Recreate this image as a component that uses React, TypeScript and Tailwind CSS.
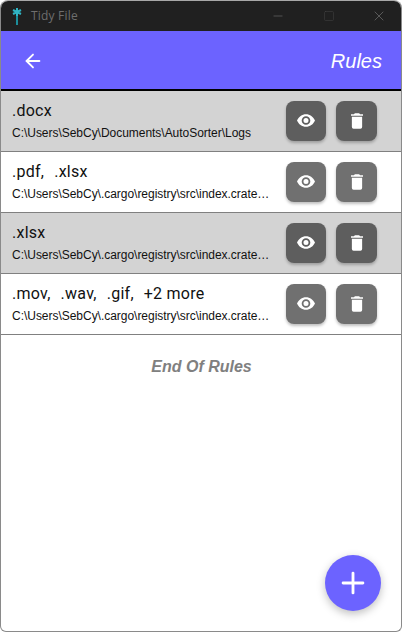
import { ArrowLeft, Minus, Plus, Square, X } from "lucide-react";

type Rule = {
  types: string[];
  path: string;
  shaded: boolean;
};

const cargoPath = "C:\\Users\\SebCy\\.cargo\\registry\\src\\index.crate…";

const rules: Rule[] = [
  { types: [".docx"], path: "C:\\Users\\SebCy\\Documents\\AutoSorter\\Logs", shaded: true },
  { types: [".pdf,", ".xlsx"], path: cargoPath, shaded: false },
  { types: [".xlsx"], path: cargoPath, shaded: true },
  { types: [".mov,", ".wav,", ".gif,", "+2 more"], path: cargoPath, shaded: false },
];

function TrashIcon() {
  return (
    <svg width="12" height="16" viewBox="0 0 14 18" fill="white">
      <path d="M4.5 0h5l1 1H14v2H0V1h3.500zM1 4h12v12a2 2 0 0 1-2 2H3a2 2 0 0 1-2-2z" />
    </svg>
  );
}

function EyeIcon() {
  return (
    <svg width="18" height="13" viewBox="0 0 20 14">
      <path fill="white" fillRule="evenodd" d="M10 0c4.400 0 8.200 2.800 10 7-1.800 4.200-5.600 7-10 7S1.800 11.200 0 7c1.800-4.200 5.600-7 10-7zm0 2.200a4.800 4.800 0 1 0 0 9.600 4.800 4.800 0 0 0 0-9.600zm0 2a2.800 2.800 0 1 1 0 5.600 2.800 2.800 0 0 1 0-5.600z" />
    </svg>
  );
}

function RuleRow({ rule }: { rule: Rule }) {
  const btn = rule.shaded ? "bg-[#5e5e5e]" : "bg-[#707070]";
  return (
    <div className={`flex h-[61px] items-center border-b border-[#808080] ${rule.shaded ? "bg-[#d3d3d3]" : "bg-white"}`}>
      <div className="w-[259px] ml-[11px] min-w-0 pb-px">
        <div className="flex gap-[10px] text-[16px] leading-[20px] tracking-[0.25px] text-[#111] font-['Roboto',sans-serif]">
          {rule.types.map((t) => (
            <span key={t}>{t}</span>
          ))}
        </div>
        <div className="mt-[4px] whitespace-nowrap text-[12px] leading-[16px] tracking-[-0.03px] text-[#111] font-['Liberation_Sans',sans-serif]">
          {rule.path}
        </div>
      </div>
      <div className="ml-[15px] flex gap-[10px] pb-px">
        <button className={`flex h-10 w-10 items-center justify-center rounded-lg shadow-[0_2px_3px_rgba(0,0,0,0.25)] ${btn}`}>
          <EyeIcon />
        </button>
        <button className={`flex h-10 w-[41px] items-center justify-center rounded-lg shadow-[0_2px_3px_rgba(0,0,0,0.25)] ${btn}`}>
          <TrashIcon />
        </button>
      </div>
    </div>
  );
}

export default function App() {
  return (
    <div className="h-[632px] w-[402px] bg-white overflow-hidden">
      <div className="relative flex h-full flex-col overflow-hidden rounded-t-lg rounded-b-md border border-[#8a8a8a] border-t-[#a8a8a8] bg-white">
        {/* Title bar */}
        <div className="flex h-[30px] shrink-0 items-center bg-[#202020] pl-[10px]">
          <svg width="12" height="18" viewBox="0 0 12 18" className="mr-[8px]">
            <path d="M5 7h2v11H5z" fill="#1c8f9c" />
            <path d="M6 1v8M2 3l8 4M10 3L2 7" stroke="#2fb4c4" strokeWidth="2" fill="none" />
          </svg>
          <span className="text-[12px] tracking-[0.2px] text-[#6e6e6e] font-['Open_Sans',sans-serif]">Tidy File</span>
          <div className="ml-auto flex items-center text-[#777]">
            <Minus size={14} strokeWidth={1} className="mr-[38px]" />
            <Square size={12} strokeWidth={1} className="mr-[36px] text-[#444]" />
            <X size={16} strokeWidth={1} className="mr-[14px]" />
          </div>
        </div>

        {/* Header */}
        <div className="flex h-[60px] shrink-0 items-center justify-between border-b-2 border-black bg-[#6c63ff] pl-[21px] pr-[19px] pt-[2px]">
          <ArrowLeft size={22} color="white" strokeWidth={2} />
          <span className="text-[20px] italic text-white font-['Liberation_Sans',sans-serif]">Rules</span>
        </div>

        {/* Rules list */}
        {rules.map((rule, i) => (
          <RuleRow key={i} rule={rule} />
        ))}

        <div className="mt-[23px] pl-[1px] text-center text-[16px] font-bold italic leading-[18px] text-[#808080] font-['Liberation_Sans',sans-serif]">
          End Of Rules
        </div>

        {/* Add button */}
        <button className="absolute bottom-[20px] right-[20px] flex h-14 w-14 items-center justify-center rounded-full bg-[#6c63ff] shadow-[0_3px_8px_rgba(0,0,0,0.25)]">
          <Plus size={34} color="white" strokeWidth={2} />
        </button>
      </div>
    </div>
  );
}
